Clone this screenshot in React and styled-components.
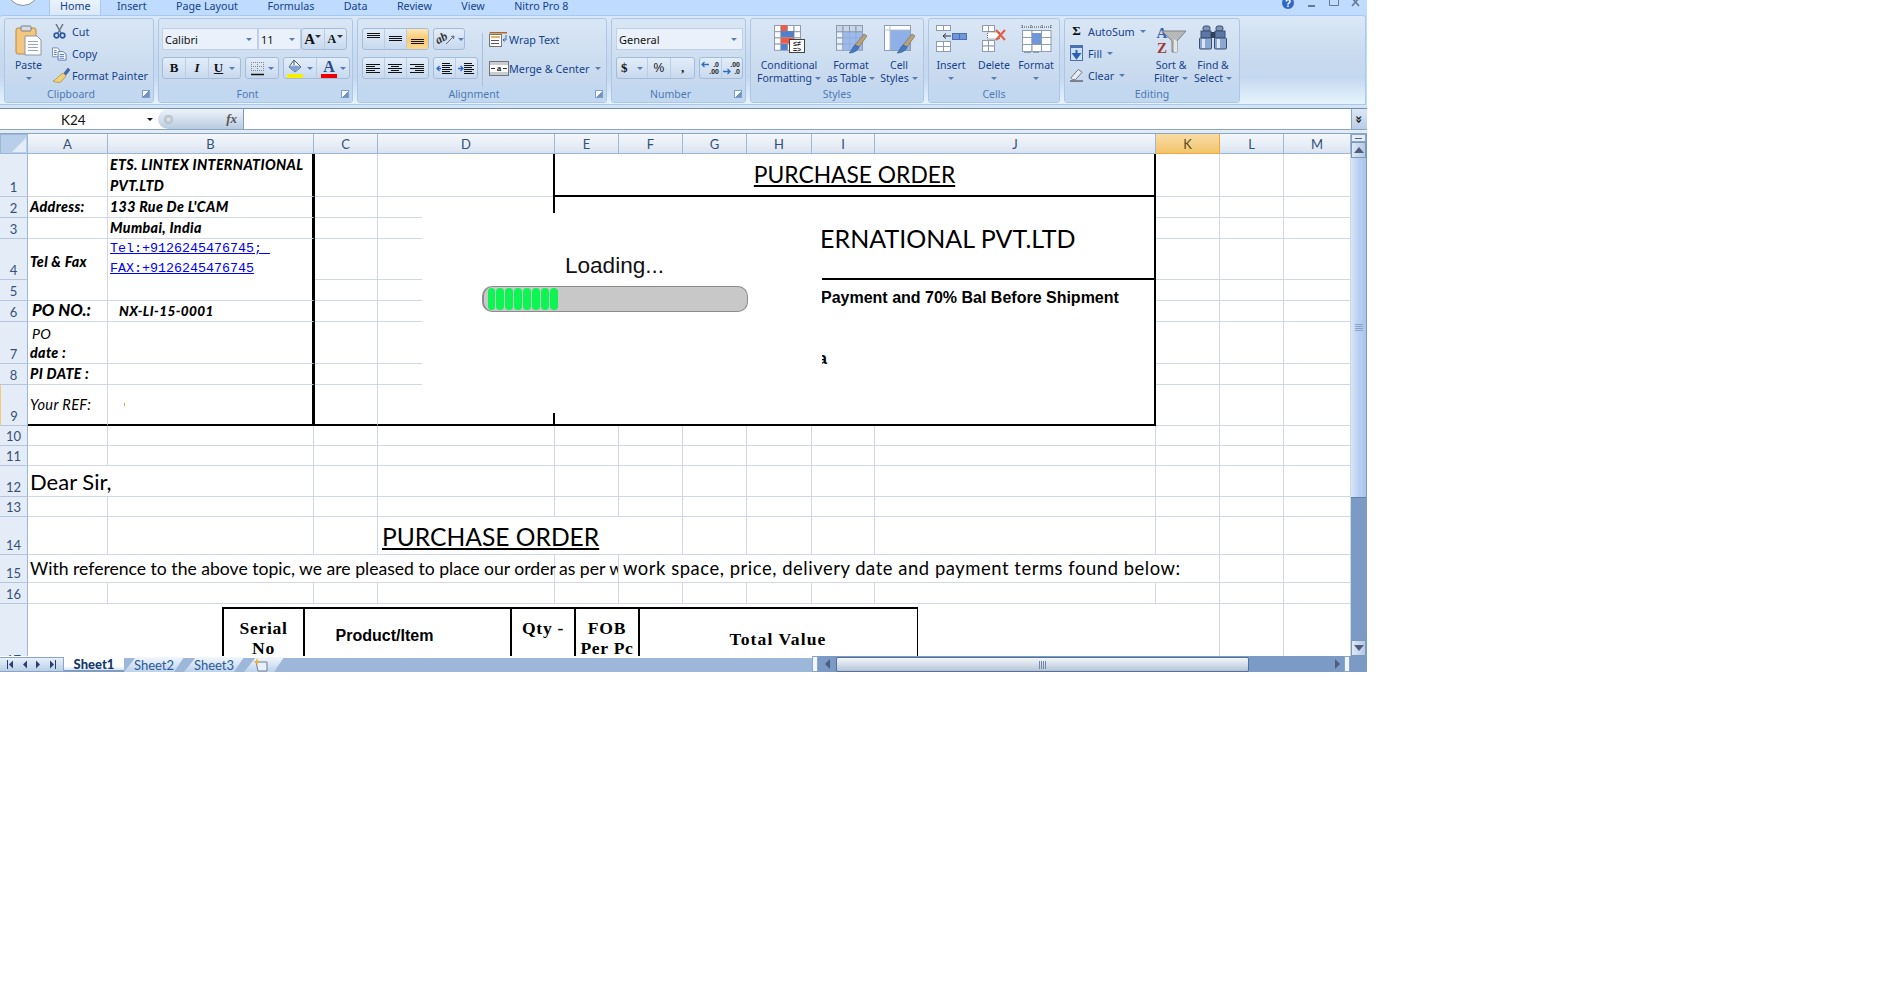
import React from "react";
import styled, { createGlobalStyle } from "styled-components";

const GlobalStyle = createGlobalStyle`
  html, body { margin: 0; padding: 0; background: #fff; }
  * { box-sizing: border-box; }
`;

const UI = `"Noto Sans", "Open Sans", sans-serif`;
const CAL = `Lato, "Open Sans", sans-serif`;
const INK = "#15428b";

const Window = styled.div`
  width: 1367px; height: 672px; display: flex; flex-direction: column;
  overflow: hidden; background: #bfdbff; font-family: ${UI};
`;

/* ---------- title / tab strip ---------- */
const TabBar = styled.div`
  height: 15px; flex: none; display: flex; align-items: center; position: relative;
  padding: 0 6px 0 49px; overflow: hidden;
`;
const OfficeOrb = styled.div`
  position: absolute; left: 7px; top: -26px; width: 32px; height: 32px; border-radius: 50%;
  background: #fff; border: 1px solid #8a8f98;
`;
const Tab = styled.div`
  height: 15px; padding: ${p => (p.$active ? "0 10px 4px 10px" : "0 14px 4px 15.5px")};
  display: flex; align-items: center; font-size: 10.7px; color: ${INK}; white-space: nowrap;
  ${p => p.$active && `background: linear-gradient(#eaf2fc, #dbe8f7); border: 1px solid #a8c8ee; border-top: 0; border-bottom: 0;`}
`;
const WinControls = styled.div`
  margin-left: auto; display: flex; align-items: center; gap: 12px; height: 15px;
`;

/* ---------- ribbon ---------- */
const Ribbon = styled.div`
  height: 90px; flex: none; display: flex; gap: 4px; padding: 2px 4px 1px 4px;
  margin-right: 1px; border: 1px solid #a8c8ee; border-radius: 3px 3px 0 0; border-left-width: 0;
  background: linear-gradient(#dbe8f7 0%, #c8daef 45%, #c4d8ef 70%, #e6f4fc 100%);
`;
const Group = styled.section`
  width: ${p => p.$w}px; flex: none; display: flex; flex-direction: column;
  border: 1px solid #abc6e6; border-radius: 3px; overflow: hidden;
  background: linear-gradient(#d9e6f5, #c6d8ee 80%, #cfe0f2);
`;
const GroupBody = styled.div`
  flex: 1; min-height: 0; display: flex; padding: ${p => p.$pad || "0"}; gap: ${p => p.$gap || 0}px;
`;
const Caption = styled.div`
  height: 16px; flex: none; position: relative; display: flex; align-items: center; justify-content: center;
  padding-right: ${p => (p.$launch ? 16 : 0)}px;
  background: #c2d8f0; color: #5079b0; font-size: 10.5px;
`;
const Launcher = styled.span`
  position: absolute; right: 3px; top: 4px; width: 8px; height: 8px;
  border: 1px solid #7e9cc4; background: linear-gradient(135deg, #fff 50%, #6f93c4 50%);
`;
const Stack = styled.div`
  display: flex; flex-direction: column; gap: ${p => p.$gap || 0}px; padding: ${p => p.$pad || 0};
  width: ${p => (p.$w ? p.$w + "px" : "auto")}; flex: none;
`;
const Row = styled.div`display: flex; gap: ${p => p.$gap ?? 4}px; height: ${p => p.$h || 22}px;`;
const BtnGroup = styled.div`
  width: ${p => p.$w}px; display: flex; height: 22px; overflow: hidden;
  border: 1px solid #a3bcd9; border-radius: 3px; background: linear-gradient(#e2edf9, #c8d9ee);
`;
const Btn = styled.div`
  flex: ${p => p.$grow || 1} 1 0; display: flex; align-items: center; justify-content: center; gap: 3px;
  border-right: 1px solid #bccde3; color: #111; font: ${p => p.$font || `11px ${UI}`};
  ${p => p.$on && `background: linear-gradient(#fde6b4, #fbc871 50%, #fdd88d);`}
  &:last-child { border-right: 0; }
`;
const Combo = styled.div`
  width: ${p => p.$w}px; height: 22px; display: flex; align-items: center; justify-content: space-between;
  padding: 0 5px 0 2px; background: #eaf1fa; border: 1px solid #bcd0e8; font: 11px ${UI}; color: #111;
`;
const Caret = styled.i`
  display: inline-block; width: 0; height: 0; flex: none; margin: ${p => p.$m || 0};
  border-left: 3px solid transparent; border-right: 3px solid transparent;
  border-top: 3px solid ${p => p.$c || "#567db1"};
`;
const SmallBtn = styled.div`
  height: 22px; display: flex; align-items: center; gap: ${p => p.$gap ?? 5}px; font-size: 10.8px; color: ${INK}; white-space: nowrap;
`;
const IconSlot = styled.span`
  width: ${p => p.$w}px; flex: none; display: flex; justify-content: center; align-items: center;
`;
const Big = styled.div`
  width: ${p => p.$w}px; flex: none; display: flex; flex-direction: column; align-items: center;
  font-size: 10.5px; line-height: 13px; color: ${INK}; text-align: center; white-space: nowrap; padding-top: 6px;
`;
const BigIcon = styled.div`height: 34px; display: flex; align-items: flex-start; justify-content: center;`;
const BigLine = styled.div`display: flex; align-items: center; gap: 3px; height: 13px;`;
const Sep = styled.div`width: 1px; height: 56px; margin: 5px 6px 0 4px; background: #a9c0dc; flex: none;`;
const LabeledRow = styled.div`
  height: 22px; display: flex; align-items: center; gap: ${p => p.$gap ?? 0}px; font-size: 10.8px; color: ${INK}; white-space: nowrap;
`;
const AutoSumGlyph = styled.span`font: bold 13px "Liberation Serif", serif; color: #111;`;

/* ---------- formula bar ---------- */
const FormulaBar = styled.div`
  height: 29px; flex: none; padding-top: 3px; display: flex; flex-direction: column;
  background: linear-gradient(#d6e4f3, #c3d5ea);
`;
const FormulaInner = styled.div`
  height: 22px; display: flex; background: #fff; border-top: 1px solid #6f8fb3; border-bottom: 1px solid #8aa6c6;
`;
const NameBox = styled.div`
  width: 158px; flex: none; display: flex; align-items: center; justify-content: space-between;
  padding: 1px 5px 0 61px; font: 13.5px ${CAL}; color: #111; background: #fff;
`;
const FxPill = styled.div`
  width: 86px; flex: none; display: flex; align-items: center; justify-content: space-between; padding: 0 6px 0 6px;
  background: linear-gradient(#eef3fa, #b9cbe0); border-radius: 11px 0 0 11px; border-right: 1px solid #7e9cc0;
  font: italic bold 13px "Liberation Serif", serif; color: #555;
`;
const FxDot = styled.span`width: 9px; height: 9px; border-radius: 50%; background: radial-gradient(#e6e9ee, #9aa5b3);`;
const FormulaInput = styled.div`flex: 1; background: #fff;`;
const Expand = styled.div`
  width: 16px; flex: none; display: flex; align-items: center; justify-content: center;
  background: linear-gradient(#dce7f5, #b9cde6); border-left: 1px solid #8aa6c6;
  font: bold 13px "DejaVu Sans", sans-serif; color: #111;
`;
const ExpandGlyph = styled.span`display: block; transform: rotate(90deg);`;
const FormulaGap = styled.div`height: 4px; flex: none; background: #e3ebf5; border-bottom: 1px solid #8aa6c6;`;

/* ---------- sheet ---------- */
const SheetArea = styled.div`height: 522px; flex: none; display: flex; background: #fff;`;
const SheetClip = styled.div`flex: 1; min-width: 0; position: relative; overflow: hidden;`;
const COLS = [28, 80, 206, 64, 177, 64, 64, 64, 65, 63, 281, 64, 64, 67];
const ROWS = [20, 43, 21, 21, 41, 21, 21, 42, 21, 41, 20, 20, 31, 20, 38, 28, 21, 66];
const SheetGrid = styled.div`
  display: grid; width: 1351px;
  grid-template-columns: ${COLS.map(c => c + "px").join(" ")};
  grid-template-rows: ${ROWS.map(c => c + "px").join(" ")};
`;
const Corner = styled.div`
  grid-area: 1 / 1; background: #b9cfe9; border: 1px solid #9db7d6; position: relative; overflow: hidden;
  &::after { content: ""; position: absolute; right: 1px; bottom: 1px; width: 0; height: 0;
    border-left: 14px solid transparent; border-bottom: 14px solid #e3ecf7; }
`;
const ColHead = styled.div`
  grid-area: 1 / ${p => p.$c}; display: flex; align-items: center; justify-content: center;
  font: 13px ${CAL}; color: ${p => (p.$on ? "#5a4a20" : "#34507a")};
  border-right: 1px solid ${p => (p.$on ? "#f2a93c" : "#9db7d6")}; border-bottom: 1px solid ${p => (p.$on ? "#f2a93c" : "#9db7d6")};
  background: ${p => (p.$on ? "linear-gradient(#f9dca6, #f2c56c)" : "linear-gradient(#f4f7fb, #e6edf6 60%, #d9e3f0)")};
`;
const RowHead = styled.div`
  grid-area: ${p => p.$r} / 1; display: flex; align-items: flex-end; justify-content: center;
  font: 13px/17px ${CAL}; color: #34507a; background: #e4ecf7;
  border-bottom: 1px solid #b3c6de; border-right: 1px solid #9db7d6;
  ${p => p.$mark && `border-left: 1px solid #f7c878;`}
`;
const Cell = styled.div`
  grid-column: ${p => p.$c} / span ${p => p.$cs || 1};
  grid-row: ${p => p.$r} / span ${p => p.$rs || 1};
  display: flex; min-width: 0; white-space: nowrap; color: #000;
  flex-direction: ${p => p.$dir || "row"};
  align-items: ${p => p.$align || "flex-end"}; justify-content: ${p => p.$just || "flex-start"};
  padding: ${p => p.$pad || "0 0 0 2px"};
  overflow: ${p => (p.$clip ? "hidden" : "visible")};
  margin: 0 ${p => (p.$br === 3 ? -1 : 0)}px 0 ${p => (p.$bl ? -2 : 0)}px;
  border-right: ${p => (p.$br ? p.$br + "px solid #000" : "1px solid #d0d7e5")};
  border-bottom: ${p => (p.$bb ? p.$bb + "px solid #000" : "1px solid #d0d7e5")};
  border-left: ${p => (p.$bl ? p.$bl + "px solid #000" : "0")};
`;
const Bi = styled.span`
  font: ${p => (p.$regular ? "italic 400" : "italic 900")} ${p => p.$size || 14.2}px/${p => p.$lh || 21}px ${CAL};
  letter-spacing: ${p => p.$ls ?? 0.36}px;
  display: block; white-space: nowrap; margin: ${p => p.$m || 0};
`;
const LinkText = styled.a`
  display: block; font: 13.33px/20px "Liberation Mono", monospace; color: #0000ff;
  text-decoration: underline; white-space: pre;
`;
const Speck = styled.span`width: 1px; height: 3px; background: #e8a040; display: block;`;
const BigTitle = styled.span`
  font: ${p => p.$size}px/1.2 ${CAL}; text-decoration: underline; text-decoration-thickness: 2px;
  text-underline-offset: 2px; color: #000;
`;
const Company = styled.span`font: 25px/1.2 ${CAL}; color: #000;`;
const Body = styled.span`font: ${p => p.$size}px/1.2 ${CAL}; letter-spacing: ${p => p.$ls || 0}px; color: #000;`;
const Terms = styled.span`font: bold 16px/18px "Liberation Sans", sans-serif; color: #000; margin: ${p => p.$m || 0};`;

const OrderTable = styled.div`
  display: grid; grid-template-columns: 81px 207px 64px 64px 280px; width: 696px; height: 60px;
  border-top: 2px solid #000; border-left: 2px solid #000; border-right: 1px solid #000; background: #fff;
`;
const OrderHead = styled.div`
  text-align: center; padding: ${p => p.$pt || 9}px ${p => p.$pr || 0}px 0 0; border-right: ${p => (p.$last ? 0 : "2px solid #000")};
  font: ${p => (p.$sans ? `bold 16px/20px "Liberation Sans", sans-serif` : `bold 17.6px/20px "Liberation Serif", serif`)};
  letter-spacing: ${p => (p.$sans ? 0 : p.$ls ?? 0.7)}px; white-space: nowrap; color: #000;
`;

/* loading overlay */
const Overlay = styled.div`
  position: absolute; left: 422px; top: 79px; width: 400px; height: 200px; background: #fff;
  display: flex; flex-direction: column; align-items: center; padding: 40px 15px 0 0;
`;
const LoadingText = styled.div`font: 22.6px/26px "Liberation Sans", sans-serif; color: #111; margin-bottom: 7px;`;
const Bar = styled.div`
  width: 266px; height: 26px; border: 1px solid #8c8c8c; border-radius: 10px; background: #c8c8c8;
  display: flex; align-items: stretch; gap: 1.6px; padding: 1px 3px 1px 4px; border-left-width: 2px;
`;
const Seg = styled.span`width: 7.4px; background: #0cf552; border-radius: 4px; flex: none;`;

/* vertical scrollbar */
const VScroll = styled.div`width: 16px; flex: none; display: flex; flex-direction: column; background: #7b9ac6; padding-right: 1px;`;
const Splitter = styled.div`height: 8px; flex: none; background: #e3ecf7; border: 1px solid #8aa6c6; display:flex; align-items:center; justify-content:center;`;
const SplitMark = styled.span`width: 7px; height: 1px; background: #567; display: block;`;
const VArrow = styled.div`
  height: 16px; flex: none; display: flex; align-items: center; justify-content: center;
  background: linear-gradient(90deg, #dfe8f4, #b5c9e2); border: 1px solid #7a96bb;
`;
const Tri = styled.i`
  width: 0; height: 0; display: block;
  ${p => p.$dir === "up" && `border-left:5px solid transparent;border-right:5px solid transparent;border-bottom:6px solid #4c5f80;`}
  ${p => p.$dir === "down" && `border-left:5px solid transparent;border-right:5px solid transparent;border-top:6px solid #4c5f80;`}
  ${p => p.$dir === "left" && `border-top:5px solid transparent;border-bottom:5px solid transparent;border-right:5px solid #4c5f80;`}
  ${p => p.$dir === "right" && `border-top:5px solid transparent;border-bottom:5px solid transparent;border-left:5px solid #4c5f80;`}
`;
const VThumb = styled.div`
  height: 340px; flex: none; background: linear-gradient(90deg, #d9e6f8, #b9d0f2 50%, #a9c5ec);
  border-bottom: 1px solid #5f7fa8; display: flex; align-items: center; justify-content: center;
`;
const VTrack = styled.div`flex: 1;`;
const Grip = styled.span`width: 8px; height: 7px; display: block; background: repeating-linear-gradient(#8aa3c4 0 1px, transparent 1px 2px);`;

/* bottom strip */
const BottomBar = styled.div`height: 16px; flex: none; display: flex; background: #7b9ac6;`;
const SheetTabs = styled.div`
  width: 812px; flex: none; display: flex; background: linear-gradient(#fff 2px, #9db7da 2px);
`;
const NavBox = styled.div`
  width: 64px; flex: none; margin-top: 1px; display: flex; align-items: center; justify-content: space-around;
  padding: 0 4px; background: linear-gradient(#e8f0fa, #b9cfe9); border: 1px solid #8aa6c6; border-left: 0;
`;
const SheetTab = styled.div`
  width: ${p => p.$w}px; flex: none; margin-top: 1px; display: flex; align-items: center;
  justify-content: center; padding-right: ${p => p.$pr || 0}px;
  font: ${p => (p.$active ? "900" : "400")} 13px ${CAL}; color: ${p => (p.$active ? "#15386f" : "#2b5a9a")};
  background: ${p => (p.$active ? "linear-gradient(#fff 70%, #d5e3f3)" : "linear-gradient(#f2f7fd, #bcd2ec)")};
  clip-path: polygon(12px 0, 100% 0, calc(100% - 10px) 100%, 0 100%);
  ${p => p.$active && `clip-path: none; border-bottom: 2px solid #7e9cc4;`}
`;
const Handle = styled.div`
  width: ${p => p.$w || 6}px; flex: none; background: #f2f6fb; border: 1px solid #8aa6c6;
`;
const HArrow = styled.div`width: ${p => p.$w}px; flex: none; display: flex; align-items: center; justify-content: center; background: #7b9ac6;`;
const HTrack = styled.div`flex: 1; min-width: 0; display: flex; align-items: stretch; background: #7b9ac6;`;
const HThumb = styled.div`
  width: 413px; flex: none; display: flex; align-items: center; justify-content: center; margin-top: 1px;
  background: linear-gradient(#f2f5f9, #d4dee9 50%, #b3c3d6); border: 1px solid #53719b; border-radius: 2px;
`;
const HGrip = styled.span`width: 8px; height: 8px; display: block; background: repeating-linear-gradient(90deg, #7288a8 0 1px, transparent 1px 2px);`;
const BlankStrip = styled.div`height: 325px; background: #fff;`;

/* ---------- icons ---------- */
const S = ({ w, h, children }) => <svg width={w} height={h} viewBox={`0 0 ${w} ${h}`}>{children}</svg>;
const GridR = ({ x, y, cols, rows, cw, ch, fill = "#fff", stroke = "#8e9bb0" }) => (
  <>
    {Array.from({ length: rows }).flatMap((_, r) =>
      Array.from({ length: cols }).map((_, c) => (
        <rect key={`${r}-${c}`} x={x + c * cw + 0.5} y={y + r * ch + 0.5} width={cw} height={ch} fill={fill} stroke={stroke} strokeWidth="1" />
      ))
    )}
  </>
);
const Brush = ({ x = 0, y = 0 }) => (
  <g transform={`translate(${x} ${y})`}>
    <path d="M15 0 L18 2 L10 13 L6 11 Z" fill="#b9a27a" stroke="#6f6248" strokeWidth=".6" />
    <path d="M6 11 L10 13 C9 17 4 19 0 19 C3 17 3 13 6 11 Z" fill="#4a78bd" stroke="#2f5a98" strokeWidth=".6" />
  </g>
);
const PasteIcon = () => (
  <S w={27} h={31}>
    <rect x="1" y="3" width="20" height="26" rx="2" fill="#f5c77e" stroke="#b58a45" />
    <rect x="6" y="1" width="10" height="5" rx="1" fill="#d9dde3" stroke="#7a7f88" />
    <path d="M10 11 H22 L26 15 V30 H10 Z" fill="#fff" stroke="#8c97a8" />
    {[16, 19, 22, 25].map(y => <path key={y} d={`M13 ${y}.5 H23`} stroke="#9aa5b5" />)}
  </S>
);
const CutIcon = () => (
  <S w={13} h={15}>
    <path d="M3 0 L8 9 M10 0 L5 9" stroke="#6d7686" strokeWidth="1.5" />
    <circle cx="3.5" cy="11.5" r="2.3" fill="none" stroke="#2f56a0" strokeWidth="1.7" />
    <circle cx="9.5" cy="11.5" r="2.3" fill="none" stroke="#2f56a0" strokeWidth="1.7" />
  </S>
);
const CopyIcon = () => (
  <S w={16} h={14}>
    <path d="M.5 .5 H6 L8 3 V10 H.5 Z" fill="#fff" stroke="#6d89b5" />
    <path d="M6.5 4.5 H12 L15 7 V13.5 H6.5 Z" fill="#fff" stroke="#5a78a8" />
    {[7, 9, 11].map(y => <path key={y} d={`M8 ${y}.5 H13`} stroke="#4f73ad" />)}
    {[3, 5, 7].map(y => <path key={y} d={`M2 ${y}.5 H5`} stroke="#4f73ad" />)}
  </S>
);
const PainterIcon = () => (
  <S w={17} h={15}>
    <path d="M10 5 L13 8 L8 14 C5 15 2 14 0 13 C3 12 5 8 10 5 Z" fill="#eed27a" stroke="#a28a3c" strokeWidth=".7" />
    <path d="M11 5 L15 0 L17 2 L13 7 Z" fill="#3f6db0" stroke="#2a4c80" strokeWidth=".5" />
  </S>
);
const LinesIcon = ({ widths, y0 = 1, step = 2, w = 15, dy = 0 }) => (
  <S w={w} h={14}>
    {widths.map((l, i) => <rect key={i} x={l[0]} y={y0 + dy + i * step} width={l[1]} height="1" fill="#111" />)}
  </S>
);
const OrientIcon = () => (
  <S w={22} h={15}>
    <text x="1" y="11" fontFamily="Liberation Serif" fontStyle="italic" fontWeight="bold" fontSize="12" fill="#333" transform="rotate(-30 5 8)">ab</text>
    <path d="M11 12 L19 4" stroke="#667" /><path d="M19 4 l-3 .5 M19 4 l-.5 3" stroke="#667" />
  </S>
);
const IndentIcon = ({ right }) => (
  <S w={17} h={13}>
    {[1, 3, 5, 7, 9, 11].map((y, i) => <rect key={y} x={6} y={y} width={i % 2 ? 10 : 8} height="1" fill="#111" />)}
    {right ? <path d="M0 6.5 H4 M2.5 4 L5 6.5 L2.5 9" stroke="#2f6cc4" strokeWidth="1.3" fill="none" />
           : <path d="M5 6.5 H1 M3.5 4 L1 6.5 L3.5 9" stroke="#2f6cc4" strokeWidth="1.3" fill="none" />}
  </S>
);
const WrapIcon = () => (
  <S w={19} h={15}>
    <rect x=".5" y="2.5" width="12" height="12" fill="#fff" stroke="#777" />
    <path d="M.5 .8 H18" stroke="#b06a20" strokeWidth="1.4" />
    <rect x="2" y="4" width="9" height="2" fill="#e8b45f" />
    <path d="M2 8.5 H10 M2 11.5 H10" stroke="#556" />
    <path d="M17 3 V8 H14 M15.5 6.5 L14 8 L15.5 9.5" stroke="#3a6ab0" fill="none" />
  </S>
);
const MergeIcon = () => (
  <S w={20} h={15}>
    <rect x=".5" y=".5" width="19" height="14" fill="#fff" stroke="#777" />
    <rect x="1" y="1" width="18" height="3" fill="#c9ccd2" /><rect x="1" y="11" width="18" height="3" fill="#c9ccd2" />
    <text x="10" y="10" textAnchor="middle" fontFamily="Liberation Serif" fontWeight="bold" fontSize="9" fill="#222">a</text>
    <path d="M2 7.5 H6 M14 7.5 H18" stroke="#333" />
  </S>
);
const BordersIcon = () => (
  <S w={15} h={15}>
    {[1, 5, 9].map(y => <path key={y} d={`M1 ${y}.5 H13`} stroke="#888" strokeDasharray="1 1" />)}
    {[1, 7, 13].map(x => <path key={x} d={`M${x}.5 1 V10`} stroke="#888" strokeDasharray="1 1" />)}
    <path d="M1 13.5 H14" stroke="#111" strokeWidth="1.4" />
  </S>
);
const FillIcon = () => (
  <S w={17} h={19}>
    <path d="M7 1 L14 8 L8 13 L2 8 Z" fill="#fff" stroke="#555" />
    <path d="M7 1 V6" stroke="#3a6ab0" strokeWidth="1.2" />
    <path d="M2 8 C3 6 12 6 14 8 L8 13 Z" fill="#7fa3d4" />
    <rect x="0" y="15" width="16" height="4" fill="#f6f000" />
  </S>
);
const FontColorIcon = () => (
  <S w={16} h={19}>
    <text x="8" y="13" textAnchor="middle" fontFamily="Liberation Serif" fontWeight="bold" fontSize="16" fill="#2a4a88">A</text>
    <rect x="0" y="15" width="16" height="4" fill="#ee0000" />
  </S>
);
const DecInc = ({ flip }) => (
  <S w={19} h={14}>
    <text x="18" y="6" textAnchor="end" fontFamily="Liberation Sans" fontWeight="bold" fontSize="7" fill="#222">{flip ? ".00" : ".0"}</text>
    <text x="18" y="13" textAnchor="end" fontFamily="Liberation Sans" fontWeight="bold" fontSize="7" fill="#222">{flip ? ".0" : ".00"}</text>
    {flip ? <path d="M1 10.5 H8 M5.5 8 L8 10.5 L5.5 13" stroke="#2f6cc4" strokeWidth="1.3" fill="none" />
          : <path d="M8 3.5 H1 M3.5 1 L1 3.5 L3.5 6" stroke="#2f6cc4" strokeWidth="1.3" fill="none" />}
  </S>
);
const CondIcon = () => (
  <S w={31} h={28}>
    <GridR x={0} y={0} cols={4} rows={4} cw={6.5} ch={6.2} />
    <rect x="7" y="0" width="6" height="6" fill="#ee5b46" />
    <rect x="7" y="6" width="13" height="6" fill="#4f81cf" />
    <rect x="7" y="12.5" width="13" height="6" fill="#ee5b46" />
    <rect x="7" y="19" width="6" height="6" fill="#4f81cf" />
    <rect x="15.5" y="14.5" width="15" height="13" fill="#fff" stroke="#444" />
    <text x="23" y="21" textAnchor="middle" fontSize="7" fontWeight="bold" fontFamily="Liberation Sans" fill="#222">≤≠</text>
    <text x="23" y="27" textAnchor="middle" fontSize="7" fontWeight="bold" fontFamily="Liberation Sans" fill="#222">=&gt;</text>
  </S>
);
const TableIcon = () => (
  <S w={31} h={29}>
    <GridR x={0} y={0} cols={4} rows={4} cw={6.5} ch={6.2} fill="#e9f0fb" />
    <rect x="7" y="7" width="19" height="18" fill="#8fb0e6" opacity=".85" />
    <GridR x={0} y={0} cols={4} rows={1} cw={6.5} ch={6.2} fill="#c9d6ea" />
    <Brush x={13} y={9} />
  </S>
);
const StylesIcon = () => (
  <S w={31} h={29}>
    <rect x=".5" y=".5" width="26" height="25" fill="#fff" stroke="#8e9bb0" />
    <rect x="6" y="5" width="20" height="20" fill="#8fb0e6" />
    <path d="M.5 5 H26 M6 .5 V25" stroke="#b4bfd0" />
    <Brush x={13} y={9} />
  </S>
);
const InsertIcon = () => (
  <S w={31} h={27}>
    <GridR x={0} y={0} cols={2} rows={1} cw={7} ch={5} />
    <GridR x={0} y={16} cols={2} rows={2} cw={7} ch={5} />
    <GridR x={16} y={8} cols={2} rows={1} cw={7} ch={6} fill="#6e96d8" stroke="#4a70ad" />
    <path d="M15 11 H7 M10 8.5 L7 11 L10 13.5" stroke="#333" fill="none" />
  </S>
);
const DeleteIcon = () => (
  <S w={25} h={27}>
    <GridR x={0} y={0} cols={2} rows={1} cw={6} ch={6} />
    <GridR x={0} y={15} cols={2} rows={2} cw={6} ch={5.5} />
    <rect x="5.5" y="7" width="12" height="7" fill="#fff" stroke="#667" strokeDasharray="1 1" />
    <path d="M14 5 L23 15 M23 5 L14 15" stroke="#e85a3a" strokeWidth="2" />
  </S>
);
const FormatIcon = () => (
  <S w={31} h={30}>
    <path d="M1 2 H30 M1 0 V4 M30 0 V4 M10 0 V4 M21 0 V4" stroke="#445" strokeDasharray="1 1" />
    <GridR x={1} y={5} cols={3} rows={3} cw={9.5} ch={7} fill="#fff" />
    <rect x="11" y="8" width="9" height="11" fill="#6e96d8" />
    <path d="M3 27 H10 M12 27 H18" stroke="#8e9bb0" strokeWidth="2" />
  </S>
);
const FillDownIcon = () => (
  <S w={13} h={16}>
    <rect x=".5" y=".5" width="12" height="15" fill="#cfe0f6" stroke="#4a70ad" />
    <rect x="1" y="1" width="11" height="2" fill="#4a70ad" />
    <path d="M6.5 5 V12 M3.5 9 L6.5 13 L9.5 9 Z" stroke="#2a5fb8" strokeWidth="2" fill="#2a5fb8" />
  </S>
);
const EraserIcon = () => (
  <S w={14} h={14}>
    <path d="M9 1 L13 4 L6 12 H3 L1 10 Z" fill="#e9edf2" stroke="#67707e" />
    <path d="M0 13.5 H14" stroke="#222" />
  </S>
);
const SortIcon = () => (
  <S w={31} h={30}>
    <text x="6" y="13" textAnchor="middle" fontFamily="Liberation Serif" fontWeight="bold" fontSize="15" fill="#3b63b5">A</text>
    <text x="6" y="28" textAnchor="middle" fontFamily="Liberation Serif" fontWeight="bold" fontSize="15" fill="#a03a30">Z</text>
    <path d="M6 6 H30 L21 16 V27 H16 V16 Z" fill="#b6b8ba" stroke="#7f8386" />
    <path d="M21 16 V27 H18 V14 Z" fill="#e6e6e6" />
  </S>
);
const FindIcon = () => (
  <S w={28} h={25}>
    <rect x="4" y="1" width="7" height="5" rx="2" fill="#7d93b8" stroke="#3c4e70" />
    <rect x="17" y="1" width="7" height="5" rx="2" fill="#7d93b8" stroke="#3c4e70" />
    <rect x="2" y="6" width="10" height="7" fill="#5b78a8" stroke="#3c4e70" />
    <rect x="16" y="6" width="10" height="7" fill="#5b78a8" stroke="#3c4e70" />
    <rect x="12" y="7" width="4" height="6" fill="#33405a" />
    <rect x=".5" y="13" width="12" height="11" rx="1" fill="#8ba8d2" stroke="#3c4e70" />
    <rect x="15.5" y="13" width="12" height="11" rx="1" fill="#8ba8d2" stroke="#3c4e70" />
    <rect x="3" y="14" width="3" height="9" fill="#dbe6f5" />
    <rect x="18" y="14" width="3" height="9" fill="#dbe6f5" />
  </S>
);
const HelpIcon = () => (
  <S w={14} h={15}>
    <circle cx="7" cy="3" r="6.5" fill="#2f68c8" stroke="#cfe0f5" />
    <text x="7" y="7" textAnchor="middle" fontSize="10" fontWeight="bold" fontFamily="Liberation Sans" fill="#fff">?</text>
  </S>
);
const MinIcon = () => <S w={10} h={15}><rect x="1" y="5" width="7" height="2" fill="#66778f" /></S>;
const MaxIcon = () => <S w={10} h={15}><path d="M.5 -1 H9.5 V5.5 H.5 Z" fill="none" stroke="#66778f" /></S>;
const CloseIcon = () => <S w={10} h={15}><path d="M1 -2 L8 6 M8 -2 L1 6" stroke="#66778f" strokeWidth="1.6" /></S>;
const NewSheetIcon = () => (
  <S w={16} h={14}>
    <path d="M3 4 H14 V13 H5 Z" fill="#e9f0fa" stroke="#6d7f98" />
    <path d="M4 0 L5 3 L8 3.5 L5 4.5 L4 8 L3 4.5 L0 3.5 L3 3 Z" fill="#f0b030" />
  </S>
);
const NavIcon = ({ dir, end }) => (
  <S w={7} h={9}>
    {dir === "left"
      ? <><path d="M6 .5 V8.5 L2 4.5 Z" fill="#27406e" />{end && <rect x="0" y="0" width="1" height="9" fill="#27406e" />}</>
      : <><path d="M1 .5 V8.5 L5 4.5 Z" fill="#27406e" />{end && <rect x="6" y="0" width="1" height="9" fill="#27406e" />}</>}
  </S>
);

/* ---------- sheet data ---------- */
const COL_NAMES = "ABCDEFGHIJKLM".split("");
const cell = (r, c, cs, rs, props, children) => ({ r, c, cs, rs, props, children });
const B9 = 2;

const specials = [
  cell(2, 2, 1, 1, {}),
  cell(2, 3, 1, 1, { $br: 3, $dir: "column", $align: "flex-start", $just: "flex-end" },
    <><Bi>ETS. LINTEX INTERNATIONAL</Bi><Bi>PVT.LTD</Bi></>),
  cell(3, 2, 1, 1, {}, <Bi>Address:</Bi>),
  cell(3, 3, 1, 1, { $br: 3 }, <Bi>133 Rue De L'CAM</Bi>),
  cell(4, 2, 1, 1, {}),
  cell(4, 3, 1, 1, { $br: 3 }, <Bi>Mumbai, India</Bi>),
  cell(5, 2, 1, 2, { $align: "flex-start", $pad: "12px 0 0 2px" }, <Bi>Tel &amp; Fax</Bi>),
  cell(5, 3, 1, 2, { $br: 3, $dir: "column", $align: "flex-start", $just: "flex-start" },
    <><LinkText href="#">{"Tel:+9126245476745; "}</LinkText><LinkText href="#">FAX:+9126245476745</LinkText></>),
  cell(7, 2, 1, 1, { $pad: "0 0 0 4px" }, <Bi $size={16.6} $ls={0.1}>PO NO.:</Bi>),
  cell(7, 3, 1, 1, { $br: 3, $pad: "0 0 0 11px", $align: "center" }, <Bi $size={13.6}>NX-LI-15-0001</Bi>),
  cell(8, 2, 1, 1, { $dir: "column", $align: "flex-start", $just: "flex-end" },
    <><Bi $regular $lh={17} $m="0 0 0 2px">PO</Bi><Bi>date :</Bi></>),
  cell(8, 3, 1, 1, { $br: 3 }),
  cell(9, 2, 1, 1, {}, <Bi>PI DATE :</Bi>),
  cell(9, 3, 1, 1, { $br: 3 }),
  cell(10, 2, 1, 1, { $bb: B9, $align: "center" }, <Bi $regular $size={14.6}>Your REF:</Bi>),
  cell(10, 3, 1, 1, { $br: 3, $bb: B9, $align: "center", $pad: "0 0 0 16px" }, <Speck />),
  cell(10, 4, 1, 1, { $bb: B9 }),
  cell(10, 5, 1, 1, { $bb: B9 }),
  cell(2, 6, 6, 1, { $bl: 2, $br: 2, $bb: 2, $just: "center", $align: "center", $pad: "0" }, <BigTitle $size={22.8}>PURCHASE ORDER</BigTitle>),
  cell(3, 6, 6, 3, { $bl: 2, $br: 2, $bb: 2, $just: "center", $align: "center", $pad: "0" }, <Company>ETS. LINTEX INTERNATIONAL PVT.LTD</Company>),
  cell(6, 6, 6, 5, { $bl: 2, $br: 2, $bb: B9, $dir: "column", $align: "flex-start", $just: "flex-start", $pad: "9px 0 0 266px" },
    <><Terms>Payment and 70% Bal Before Shipment</Terms><Terms $m="43px 0 0 -3px">a</Terms></>),
  cell(13, 2, 2, 1, { $pad: "0 0 1px 2px" }, <Body $size={22}>Dear Sir,</Body>),
  cell(15, 5, 3, 1, { $pad: "0 0 3px 4px" }, <BigTitle $size={24.6}>PURCHASE ORDER</BigTitle>),
  cell(16, 2, 4, 1, { $align: "center", $pad: "0 0 0 2px" }, <Body $size={17.6}>With reference to the above topic, we are pleased to place our order</Body>),
  cell(16, 6, 1, 1, { $align: "center", $clip: true, $pad: "0 0 0 4px" }, <Body $size={17.6}>as per with</Body>),
  cell(16, 7, 6, 1, { $align: "center", $pad: "0 0 0 4px" }, <Body $size={18.4} $ls={0.55}>work space, price, delivery date and payment terms found below:</Body>),
  cell(18, 2, 11, 1, { $align: "flex-start", $pad: "3px 0 0 194px", $clip: true },
    <OrderTable>
      <OrderHead>Serial<br />No</OrderHead>
      <OrderHead $sans $pt={17} $pr={46}>Product/Item</OrderHead>
      <OrderHead>Qty -</OrderHead>
      <OrderHead>FOB<br />Per Pc</OrderHead>
      <OrderHead $last $pt={20} $pr={4} $ls={1.1}>Total Value</OrderHead>
    </OrderTable>),
];

function buildCells() {
  const used = new Set();
  specials.forEach(s => {
    for (let r = s.r; r < s.r + s.rs; r++) for (let c = s.c; c < s.c + s.cs; c++) used.add(`${r}:${c}`);
  });
  const blanks = [];
  for (let r = 2; r <= ROWS.length; r++) for (let c = 2; c <= COLS.length; c++) {
    if (!used.has(`${r}:${c}`)) blanks.push(cell(r, c, 1, 1, {}));
  }
  return [...blanks, ...specials];
}
const ALL_CELLS = buildCells();

const BigBtn = ({ w, icon, lines }) => (
  <Big $w={w}>
    <BigIcon>{icon}</BigIcon>
    {lines.map((l, i) => <BigLine key={i}>{l}{i === lines.length - 1 && <Caret />}</BigLine>)}
  </Big>
);

export default function App() {
  return (
    <>
      <GlobalStyle />
      <Window>
        <TabBar>
          <OfficeOrb />
          {["Home", "Insert", "Page Layout", "Formulas", "Data", "Review", "View", "Nitro Pro 8"].map((t, i) => (
            <Tab key={t} $active={i === 0}>{t}</Tab>
          ))}
          <WinControls>
            <HelpIcon /><MinIcon /><MaxIcon /><CloseIcon />
          </WinControls>
        </TabBar>

        <Ribbon>
          <Group $w={150}>
            <GroupBody>
              <Big $w={47}>
                <BigIcon><PasteIcon /></BigIcon>
                <BigLine>Paste</BigLine>
                <BigLine><Caret /></BigLine>
              </Big>
              <Stack $pad="2px 0 0 0">
                <SmallBtn><IconSlot $w={15}><CutIcon /></IconSlot>Cut</SmallBtn>
                <SmallBtn><IconSlot $w={15}><CopyIcon /></IconSlot>Copy</SmallBtn>
                <SmallBtn $gap={2}><IconSlot $w={18}><PainterIcon /></IconSlot>Format Painter</SmallBtn>
              </Stack>
            </GroupBody>
            <Caption $launch>Clipboard<Launcher /></Caption>
          </Group>

          <Group $w={195}>
            <GroupBody $pad="9px 0 0 3px">
              <Stack $gap={7}>
                <Row $gap={0}>
                  <Combo $w={96}>Calibri<Caret /></Combo>
                  <Combo $w={43}>11<Caret /></Combo>
                  <BtnGroup $w={46}>
                    <Btn $font={`bold 15px "Liberation Serif", serif`}>A<Caret $m="0 0 6px -3px" $c="#333" /></Btn>
                    <Btn $font={`bold 12px "Liberation Serif", serif`}>A<Caret $m="0 0 6px -2px" $c="#333" /></Btn>
                  </BtnGroup>
                </Row>
                <Row>
                  <BtnGroup $w={79}>
                    <Btn $font={`bold 13px "Liberation Serif", serif`}>B</Btn>
                    <Btn $font={`italic bold 13px "Liberation Serif", serif`}>I</Btn>
                    <Btn $grow={1.4} $font={`bold 13px "Liberation Serif", serif`}><u>U</u><Caret $m="0 0 0 3px" /></Btn>
                  </BtnGroup>
                  <BtnGroup $w={34}><Btn><BordersIcon /><Caret /></Btn></BtnGroup>
                  <BtnGroup $w={67}>
                    <Btn><FillIcon /><Caret /></Btn>
                    <Btn><FontColorIcon /><Caret /></Btn>
                  </BtnGroup>
                </Row>
              </Stack>
            </GroupBody>
            <Caption $launch>Font<Launcher /></Caption>
          </Group>

          <Group $w={250}>
            <GroupBody $pad="9px 0 0 4px">
              <Stack $gap={7}>
                <Row>
                  <BtnGroup $w={67}>
                    <Btn><LinesIcon widths={[[1, 13], [1, 13], [1, 13]]} dy={0} /></Btn>
                    <Btn><LinesIcon widths={[[1, 13], [1, 13], [1, 13]]} dy={3} /></Btn>
                    <Btn $on><LinesIcon widths={[[1, 13], [1, 13], [1, 13]]} dy={6} /></Btn>
                  </BtnGroup>
                  <BtnGroup $w={32}><Btn><OrientIcon /><Caret $m="0 0 0 -2px" /></Btn></BtnGroup>
                </Row>
                <Row>
                  <BtnGroup $w={67}>
                    <Btn><LinesIcon widths={[[0, 14], [0, 9], [0, 14], [0, 9], [0, 14]]} dy={2} /></Btn>
                    <Btn><LinesIcon widths={[[0, 14], [3, 8], [0, 14], [3, 8], [0, 14]]} dy={2} /></Btn>
                    <Btn><LinesIcon widths={[[0, 14], [5, 9], [0, 14], [5, 9], [0, 14]]} dy={2} /></Btn>
                  </BtnGroup>
                  <BtnGroup $w={45}><Btn><IndentIcon /></Btn><Btn><IndentIcon right /></Btn></BtnGroup>
                </Row>
              </Stack>
              <Sep />
              <Stack>
                <LabeledRow $gap={1}><WrapIcon />Wrap Text</LabeledRow>
                <Row $h={7} />
                <LabeledRow><MergeIcon />Merge &amp; Center<Caret $m="0 0 0 5px" /></LabeledRow>
              </Stack>
            </GroupBody>
            <Caption $launch>Alignment<Launcher /></Caption>
          </Group>

          <Group $w={135}>
            <GroupBody $pad="9px 0 0 4px">
              <Stack $gap={7}>
                <Combo $w={127}>General<Caret /></Combo>
                <Row>
                  <BtnGroup $w={79}>
                    <Btn $font={`bold 13px "Liberation Serif", serif`} $grow={1.3}>$<Caret $m="0 0 0 6px" /></Btn>
                    <Btn $font={`12px "Liberation Sans", sans-serif`}>%</Btn>
                    <Btn $font={`bold 13px "Liberation Serif", serif`}>,</Btn>
                  </BtnGroup>
                  <BtnGroup $w={44}><Btn><DecInc /></Btn><Btn><DecInc flip /></Btn></BtnGroup>
                </Row>
              </Stack>
            </GroupBody>
            <Caption $launch>Number<Launcher /></Caption>
          </Group>

          <Group $w={174}>
            <GroupBody>
              <BigBtn w={76} icon={<CondIcon />} lines={["Conditional", "Formatting"]} />
              <BigBtn w={48} icon={<TableIcon />} lines={["Format", "as Table"]} />
              <BigBtn w={48} icon={<StylesIcon />} lines={["Cell", "Styles"]} />
            </GroupBody>
            <Caption>Styles</Caption>
          </Group>

          <Group $w={132}>
            <GroupBody>
              <Big $w={44}><BigIcon><InsertIcon /></BigIcon><BigLine>Insert</BigLine><BigLine><Caret /></BigLine></Big>
              <Big $w={42}><BigIcon><DeleteIcon /></BigIcon><BigLine>Delete</BigLine><BigLine><Caret /></BigLine></Big>
              <Big $w={42}><BigIcon><FormatIcon /></BigIcon><BigLine>Format</BigLine><BigLine><Caret /></BigLine></Big>
            </GroupBody>
            <Caption>Cells</Caption>
          </Group>

          <Group $w={176}>
            <GroupBody>
              <Stack $w={84} $pad="1px 0 0 5px">
                <SmallBtn><IconSlot $w={13}><AutoSumGlyph>Σ</AutoSumGlyph></IconSlot>AutoSum<Caret /></SmallBtn>
                <SmallBtn><IconSlot $w={13}><FillDownIcon /></IconSlot>Fill<Caret /></SmallBtn>
                <SmallBtn><IconSlot $w={13}><EraserIcon /></IconSlot>Clear<Caret /></SmallBtn>
              </Stack>
              <BigBtn w={44} icon={<SortIcon />} lines={["Sort &", "Filter"]} />
              <BigBtn w={40} icon={<FindIcon />} lines={["Find &", "Select"]} />
            </GroupBody>
            <Caption>Editing</Caption>
          </Group>
        </Ribbon>

        <FormulaBar>
          <FormulaInner>
            <NameBox>K24<Caret $c="#111" /></NameBox>
            <FxPill><FxDot />fx</FxPill>
            <FormulaInput />
            <Expand><ExpandGlyph>»</ExpandGlyph></Expand>
          </FormulaInner>
          <FormulaGap />
        </FormulaBar>

        <SheetArea>
          <SheetClip>
            <SheetGrid>
              <Corner />
              {COL_NAMES.map((n, i) => <ColHead key={n} $c={i + 2} $on={n === "K"}>{n}</ColHead>)}
              {ROWS.slice(1).map((_, i) => <RowHead key={i} $r={i + 2} $mark={i === 8}>{i + 1}</RowHead>)}
              {ALL_CELLS.map(s => (
                <Cell key={`${s.r}-${s.c}`} $r={s.r} $c={s.c} $cs={s.cs} $rs={s.rs} {...s.props}>{s.children}</Cell>
              ))}
            </SheetGrid>
            <Overlay>
              <LoadingText>Loading...</LoadingText>
              <Bar>{Array.from({ length: 8 }).map((_, i) => <Seg key={i} />)}</Bar>
            </Overlay>
          </SheetClip>
          <VScroll>
            <Splitter><SplitMark /></Splitter>
            <VArrow><Tri $dir="up" /></VArrow>
            <VThumb><Grip /></VThumb>
            <VTrack />
            <VArrow><Tri $dir="down" /></VArrow>
          </VScroll>
        </SheetArea>

        <BottomBar>
          <SheetTabs>
            <NavBox>
              <NavIcon dir="left" end /><NavIcon dir="left" /><NavIcon dir="right" /><NavIcon dir="right" end />
            </NavBox>
            <SheetTab $w={60} $active>Sheet1</SheetTab>
            <SheetTab $w={60}>Sheet2</SheetTab>
            <SheetTab $w={60}>Sheet3</SheetTab>
            <SheetTab $w={40} $pr={6}><NewSheetIcon /></SheetTab>
          </SheetTabs>
          <Handle />
          <HArrow $w={18}><Tri $dir="left" /></HArrow>
          <HTrack>
            <HThumb><HGrip /></HThumb>
          </HTrack>
          <HArrow $w={14}><Tri $dir="right" /></HArrow>
          <Handle />
          <HArrow $w={17} />
        </BottomBar>
      </Window>
      <BlankStrip />
    </>
  );
}
